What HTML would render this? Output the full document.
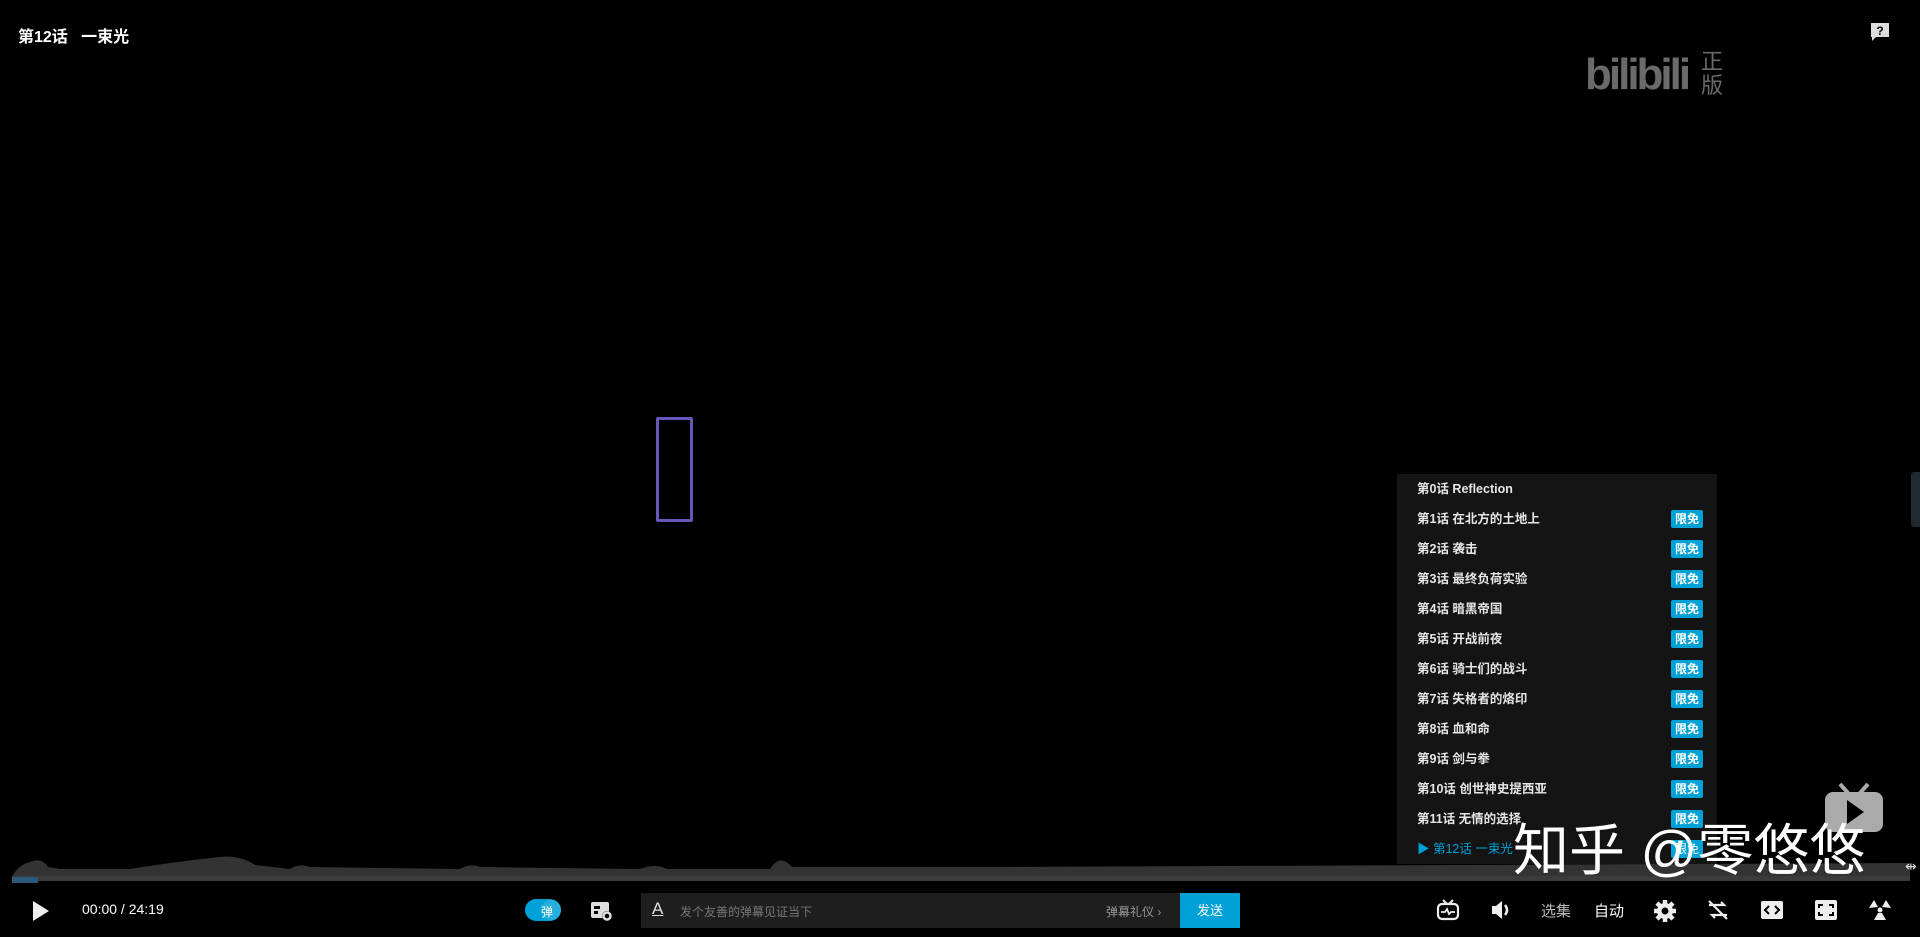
<!DOCTYPE html>
<html><head><meta charset="utf-8"><style>
*{margin:0;padding:0;box-sizing:border-box}
body{width:1920px;height:937px;background:#000;position:relative;overflow:hidden;font-family:"Liberation Sans","Noto Sans CJK SC",sans-serif;color:#fff}
.a{position:absolute}
.title{left:18px;top:23px;font-size:16px;color:#fff;font-weight:bold}
.panel{left:1397px;top:474px;width:320px;height:390px;background:#141414}
.row{position:absolute;left:20px;font-size:12.5px;color:#e6e6e6;height:30px;line-height:30px;width:286px;font-weight:bold}
.badge{position:absolute;right:0;top:6px;width:32px;height:18px;background:#00a1d6;border-radius:2px;font-size:12px;line-height:18px;text-align:center;color:#fff}
.ctl{font-size:14px;color:#fff}
</style></head><body>
<div class="a title">第12话&nbsp;&nbsp;&nbsp;一束光</div>
<svg class="a" style="left:1869px;top:21px" width="22" height="22" viewBox="0 0 22 22"><path d="M2 2h18v14H7l-4 4v-4H2z" fill="#ddd"/><text x="11" y="14" font-size="12" font-weight="bold" text-anchor="middle" fill="#000" font-family="Liberation Sans">?</text></svg>
<div class="a" style="left:1585px;top:50px;font-size:44px;font-weight:bold;color:#6a6a6a;letter-spacing:-3px;line-height:50px;font-family:'Liberation Sans Narrow','Liberation Sans',sans-serif">bilibili</div>
<div class="a" style="left:1701px;top:50px;font-size:22px;color:#6a6a6a;line-height:24px;width:26px">正版</div>
<div class="a" style="left:656px;top:417px;width:37px;height:105px;border:3px solid #6a55b8;border-radius:2px"></div>
<div class="a" style="left:1911px;top:472px;width:9px;height:55px;background:#1f2a33;border-radius:3px 0 0 3px"></div>
<svg class="a" style="left:1825px;top:783px" width="58" height="52" viewBox="0 0 58 52"><path d="M15 1l8 9M43 1l-8 9" stroke="#aaa" stroke-width="4"/><rect x="0" y="9" width="58" height="40" rx="8" fill="#aaa"/><path d="M22 17l17 12-17 12z" fill="#000"/></svg>
<div class="a panel">
<div class="row" style="top:0">第0话 Reflection</div>
<div class="row" style="top:30px">第1话 在北方的土地上<span class="badge">限免</span></div>
<div class="row" style="top:60px">第2话 袭击<span class="badge">限免</span></div>
<div class="row" style="top:90px">第3话 最终负荷实验<span class="badge">限免</span></div>
<div class="row" style="top:120px">第4话 暗黑帝国<span class="badge">限免</span></div>
<div class="row" style="top:150px">第5话 开战前夜<span class="badge">限免</span></div>
<div class="row" style="top:180px">第6话 骑士们的战斗<span class="badge">限免</span></div>
<div class="row" style="top:210px">第7话 失格者的烙印<span class="badge">限免</span></div>
<div class="row" style="top:240px">第8话 血和命<span class="badge">限免</span></div>
<div class="row" style="top:270px">第9话 剑与拳<span class="badge">限免</span></div>
<div class="row" style="top:300px">第10话 创世神史提西亚<span class="badge">限免</span></div>
<div class="row" style="top:330px">第11话 无情的选择<span class="badge">限免</span></div>
<div class="row" style="top:360px;color:#00a1d6;font-weight:normal">▶ 第12话 一束光<span class="badge">限免</span></div>
</div>
<svg class="a" style="left:0;top:845px" width="1920" height="40" viewBox="0 0 1920 40"><path d="M12 32 Q18 20 30 17 Q42 12 48 22 L60 24 L130 24 Q180 16 220 12 Q240 10 255 20 L290 24 Q300 18 310 22 L460 24 Q470 18 480 22 L640 24 Q655 18 667 24 L770 24 Q780 8 792 22 L1000 22 L1910 18 L1910 33 L12 33 Z" fill="#333"/><rect x="12" y="31" width="1898" height="5" fill="#3b3b3b"/><rect x="12" y="32" width="26" height="6" fill="#2a5a75"/></svg>
<div class="a" style="left:1513px;top:816px;font-size:56px;color:#fff;line-height:70px;white-space:nowrap">知乎 @零悠悠</div>
<svg class="a" style="left:32px;top:900px" width="18" height="22" viewBox="0 0 18 22"><path d="M1 1l16 10L1 21z" fill="#eee"/></svg>
<div class="a ctl" style="left:82px;top:901px">00:00 / 24:19</div>
<div class="a" style="left:525px;top:899px;width:36px;height:22px;border-radius:11px;background:#00a1d6"></div>
<div class="a" style="left:541px;top:900px;width:20px;height:20px;border-radius:10px;background:#fff;opacity:.15"></div>
<div class="a" style="left:541px;top:903px;font-size:12px;color:#fff">弹</div>
<svg class="a" style="left:590px;top:900px" width="24" height="22" viewBox="0 0 24 22"><rect x="1" y="2" width="18" height="16" rx="2" fill="#ddd"/><rect x="4" y="6" width="6" height="3" fill="#000"/><rect x="4" y="11" width="4" height="3" fill="#000"/><circle cx="17" cy="16" r="5" fill="#000"/><circle cx="17" cy="16" r="3.5" fill="none" stroke="#ddd" stroke-width="2.5"/></svg>
<div class="a" style="left:641px;top:893px;width:539px;height:35px;background:#1e1e1e"></div>
<div class="a" style="left:652px;top:899px;font-size:17px;color:#ddd;text-decoration:underline">A</div>
<div class="a" style="left:680px;top:903px;font-size:12px;color:#777">发个友善的弹幕见证当下</div>
<div class="a" style="left:1106px;top:903px;font-size:12px;color:#999">弹幕礼仪 ›</div>
<div class="a" style="left:1180px;top:893px;width:60px;height:35px;background:#00a1d6;color:#fff;font-size:13px;line-height:35px;text-align:center">发送</div>
<svg class="a" style="left:1436px;top:898px" width="24" height="24" viewBox="0 0 24 24"><path d="M7 2l4 4M17 2l-4 4" stroke="#eee" stroke-width="2"/><rect x="2" y="6" width="20" height="15" rx="4" fill="none" stroke="#eee" stroke-width="2.2"/><path d="M5 14h4l2-3 2 5 2-2h4" fill="none" stroke="#eee" stroke-width="1.8"/></svg>
<svg class="a" style="left:1490px;top:899px" width="24" height="22" viewBox="0 0 24 22"><path d="M2 7h4l6-5v18l-6-5H2z" fill="#eee"/><path d="M15 6q4 5 0 10" fill="none" stroke="#eee" stroke-width="2.5"/></svg>
<div class="a ctl" style="left:1541px;top:900px;color:#bbb;font-size:15px">选集</div>
<div class="a ctl" style="left:1594px;top:900px;font-size:15px">自动</div>
<svg class="a" style="left:1653px;top:899px" width="24" height="24" viewBox="0 0 24 24"><circle cx="12" cy="12" r="8" fill="#eee"/><g stroke="#eee" stroke-width="4.5"><path d="M12 1v22M1 12h22M4 4l16 16M20 4L4 20"/></g><circle cx="12" cy="12" r="3.5" fill="#000"/></svg>
<svg class="a" style="left:1706px;top:898px" width="24" height="24" viewBox="0 0 24 24"><path d="M3 7h15l-3-3M21 17H6l3 3M3 3l18 18" fill="none" stroke="#eee" stroke-width="2.2"/></svg>
<svg class="a" style="left:1760px;top:900px" width="24" height="20" viewBox="0 0 24 20"><rect x="1" y="1" width="22" height="18" rx="2" fill="#eee"/><path d="M9 6l-4 4 4 4M15 6l4 4-4 4" fill="none" stroke="#000" stroke-width="2"/></svg>
<svg class="a" style="left:1814px;top:899px" width="24" height="22" viewBox="0 0 24 22"><rect x="1" y="1" width="22" height="20" rx="2" fill="#eee"/><path d="M5 9V6h4M19 9V6h-4M5 13v3h4M19 13v3h-4" fill="none" stroke="#000" stroke-width="2"/></svg>
<svg class="a" style="left:1868px;top:898px" width="24" height="24" viewBox="0 0 24 24"><circle cx="12" cy="12" r="2.5" fill="#eee"/><path d="M10 9L6 2 1 10zM14 9l4-7 5 8zM10 15l-4 7h12l-4-7z" fill="#eee"/></svg>
<div class="a" style="left:1905px;top:858px;font-size:14px;color:#ddd">⇹</div>
</body></html>
